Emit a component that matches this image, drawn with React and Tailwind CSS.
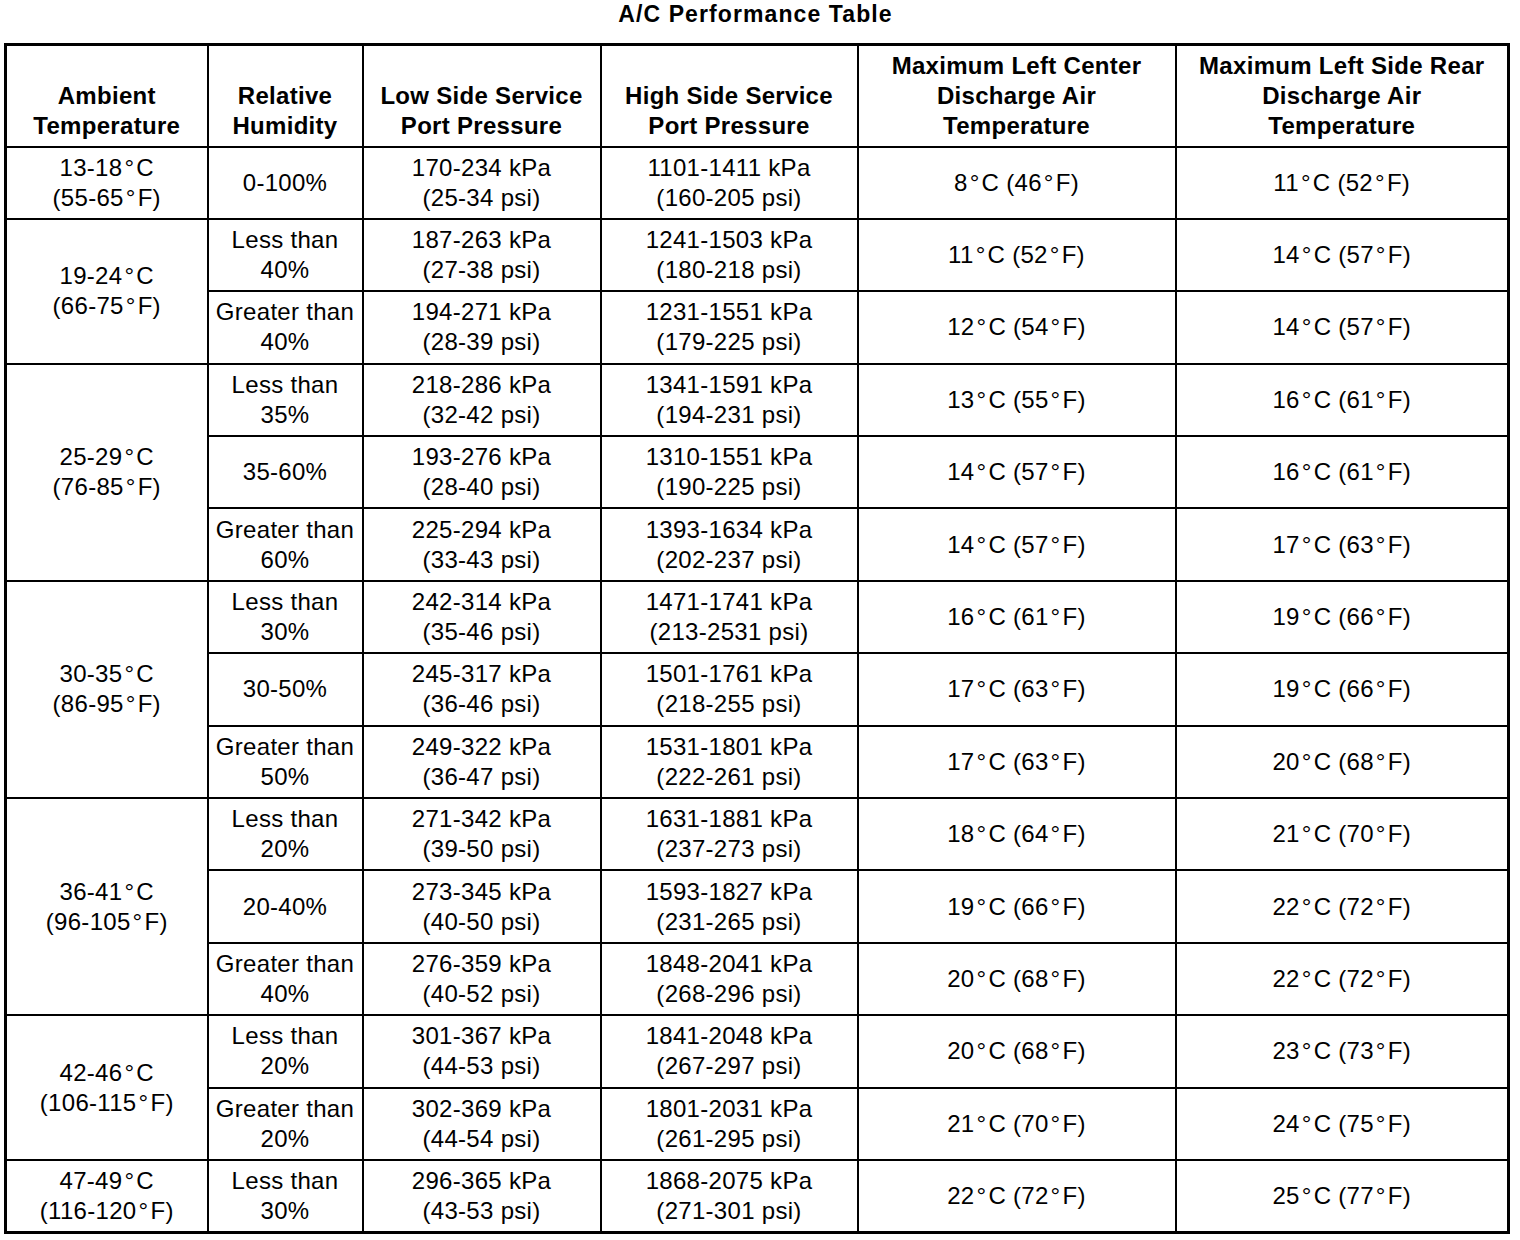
import React from "react";

const groups = [
  {
    t: ["13-18°C", "(55-65°F)"],
    rows: [
      [["0-100%"], ["170-234 kPa", "(25-34 psi)"], ["1101-1411 kPa", "(160-205 psi)"], "8°C (46°F)", "11°C (52°F)"],
    ],
  },
  {
    t: ["19-24°C", "(66-75°F)"],
    rows: [
      [["Less than", "40%"], ["187-263 kPa", "(27-38 psi)"], ["1241-1503 kPa", "(180-218 psi)"], "11°C (52°F)", "14°C (57°F)"],
      [["Greater than", "40%"], ["194-271 kPa", "(28-39 psi)"], ["1231-1551 kPa", "(179-225 psi)"], "12°C (54°F)", "14°C (57°F)"],
    ],
  },
  {
    t: ["25-29°C", "(76-85°F)"],
    rows: [
      [["Less than", "35%"], ["218-286 kPa", "(32-42 psi)"], ["1341-1591 kPa", "(194-231 psi)"], "13°C (55°F)", "16°C (61°F)"],
      [["35-60%"], ["193-276 kPa", "(28-40 psi)"], ["1310-1551 kPa", "(190-225 psi)"], "14°C (57°F)", "16°C (61°F)"],
      [["Greater than", "60%"], ["225-294 kPa", "(33-43 psi)"], ["1393-1634 kPa", "(202-237 psi)"], "14°C (57°F)", "17°C (63°F)"],
    ],
  },
  {
    t: ["30-35°C", "(86-95°F)"],
    rows: [
      [["Less than", "30%"], ["242-314 kPa", "(35-46 psi)"], ["1471-1741 kPa", "(213-2531 psi)"], "16°C (61°F)", "19°C (66°F)"],
      [["30-50%"], ["245-317 kPa", "(36-46 psi)"], ["1501-1761 kPa", "(218-255 psi)"], "17°C (63°F)", "19°C (66°F)"],
      [["Greater than", "50%"], ["249-322 kPa", "(36-47 psi)"], ["1531-1801 kPa", "(222-261 psi)"], "17°C (63°F)", "20°C (68°F)"],
    ],
  },
  {
    t: ["36-41°C", "(96-105°F)"],
    rows: [
      [["Less than", "20%"], ["271-342 kPa", "(39-50 psi)"], ["1631-1881 kPa", "(237-273 psi)"], "18°C (64°F)", "21°C (70°F)"],
      [["20-40%"], ["273-345 kPa", "(40-50 psi)"], ["1593-1827 kPa", "(231-265 psi)"], "19°C (66°F)", "22°C (72°F)"],
      [["Greater than", "40%"], ["276-359 kPa", "(40-52 psi)"], ["1848-2041 kPa", "(268-296 psi)"], "20°C (68°F)", "22°C (72°F)"],
    ],
  },
  {
    t: ["42-46°C", "(106-115°F)"],
    rows: [
      [["Less than", "20%"], ["301-367 kPa", "(44-53 psi)"], ["1841-2048 kPa", "(267-297 psi)"], "20°C (68°F)", "23°C (73°F)"],
      [["Greater than", "20%"], ["302-369 kPa", "(44-54 psi)"], ["1801-2031 kPa", "(261-295 psi)"], "21°C (70°F)", "24°C (75°F)"],
    ],
  },
  {
    t: ["47-49°C", "(116-120°F)"],
    rows: [
      [["Less than", "30%"], ["296-365 kPa", "(43-53 psi)"], ["1868-2075 kPa", "(271-301 psi)"], "22°C (72°F)", "25°C (77°F)"],
    ],
  },
];

function Deg({ s }) {
  const parts = s.split("°");
  return (
    <>
      {parts.map((p, i) => (
        <React.Fragment key={i}>
          {p}
          {i < parts.length - 1 && <span className="mx-[2px]">°</span>}
        </React.Fragment>
      ))}
    </>
  );
}

function Lines({ lines }) {
  return (
    <>
      {lines.map((l, i) => (
        <div key={i}>
          <Deg s={l} />
        </div>
      ))}
    </>
  );
}

const cell = "border-2 border-black text-center align-middle p-0 h-[72.4px]";
const head = "border-2 border-black text-center align-bottom px-0 pt-0 pb-[5px] font-bold text-[24px] tracking-[0.3px]";

export default function App() {
  return (
    <div
      className="bg-white text-black w-[1520px] min-h-[1240px]"
      style={{ fontFamily: '"Liberation Sans", Arial, Helvetica, sans-serif' }}
    >
      <div className="ml-[4px] w-[1503px] h-[28px] leading-[28px] text-center text-[23px] font-bold tracking-[1.1px]">
        A/C Performance Table
      </div>
      <table className="ml-[4px] mt-[15px] w-[1503px] table-fixed border-collapse border-[3px] border-black text-[24px] leading-[30px] tracking-[0.3px]">
        <colgroup>
          <col className="w-[202px]" />
          <col className="w-[155px]" />
          <col className="w-[238px]" />
          <col className="w-[257px]" />
          <col className="w-[318px]" />
          <col className="w-[333px]" />
        </colgroup>
        <thead>
          <tr className="h-[102px]">
            <th className={head}>
              <div>Ambient</div>
              <div>Temperature</div>
            </th>
            <th className={head}>
              <div>Relative</div>
              <div>Humidity</div>
            </th>
            <th className={head}>
              <div>Low Side Service</div>
              <div>Port Pressure</div>
            </th>
            <th className={head}>
              <div>High Side Service</div>
              <div>Port Pressure</div>
            </th>
            <th className={head}>
              <div>Maximum Left Center</div>
              <div>Discharge Air</div>
              <div>Temperature</div>
            </th>
            <th className={head}>
              <div>Maximum Left Side Rear</div>
              <div>Discharge Air</div>
              <div>Temperature</div>
            </th>
          </tr>
        </thead>
        <tbody>
          {groups.map((g, gi) =>
            g.rows.map((r, ri) => (
              <tr key={gi + "-" + ri}>
                {ri === 0 && (
                  <td className={cell} rowSpan={g.rows.length}>
                    <Lines lines={g.t} />
                  </td>
                )}
                <td className={cell}>
                  <Lines lines={r[0]} />
                </td>
                <td className={cell}>
                  <Lines lines={r[1]} />
                </td>
                <td className={cell}>
                  <Lines lines={r[2]} />
                </td>
                <td className={cell}>
                  <Deg s={r[3]} />
                </td>
                <td className={cell}>
                  <Deg s={r[4]} />
                </td>
              </tr>
            ))
          )}
        </tbody>
      </table>
    </div>
  );
}
